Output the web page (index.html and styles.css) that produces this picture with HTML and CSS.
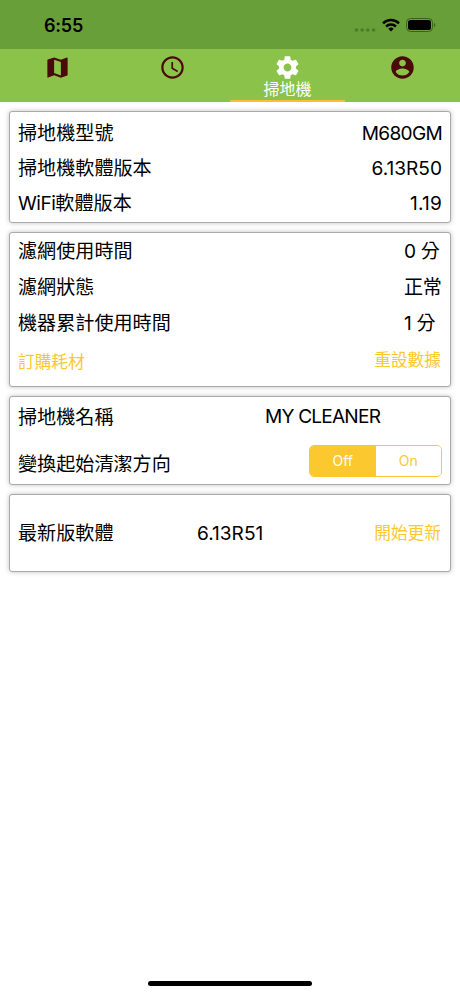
FILE: index.html
```html
<!DOCTYPE html>
<html lang="zh-Hant">
<head>
    <meta charset="UTF-8">
    <meta name="viewport" content="width=device-width, initial-scale=1.0">
    <title>掃地機</title>
    <link rel="stylesheet" href="styles.css">
</head>
<body>
    <header class="status-bar">
        <span class="clock">6:55</span>
        <div class="status-icons">
            <svg class="signal" width="22" height="4" viewBox="0 0 22 4">
                <circle cx="2.5" cy="2" r="1.8"/>
                <circle cx="8.2" cy="2" r="1.8"/>
                <circle cx="13.8" cy="2" r="1.8"/>
                <circle cx="19.6" cy="2" r="1.8"/>
            </svg>
            <svg class="wifi" width="18" height="14" viewBox="0 0 18 14" fill="none" stroke="#000" stroke-width="2.5">
                <path d="M1 5.3a11.4 11.4 0 0 1 16 0"/>
                <path d="M4.1 8.5a7 7 0 0 1 9.8 0"/>
                <path d="M6.3 10.7a3.9 3.9 0 0 1 5.4 0L9 13.5z" fill="#000" stroke="none"/>
            </svg>
            <svg class="battery" width="30" height="14" viewBox="0 0 30 14">
                <rect x="0.5" y="0.5" width="26" height="13" rx="4" fill="none" stroke="#3b611d"/>
                <rect x="2" y="2" width="23" height="10" rx="2.5"/>
                <path d="M28 4.7c1.7.8 1.7 3.8 0 4.6z" fill="#3b611d"/>
            </svg>
        </div>
    </header>

    <nav class="tabs">
        <a class="tab">
            <svg width="27" height="27" viewBox="0 0 24 24"><path d="M20.5 3l-.16.03L15 5.1 9 3 3.36 4.9c-.21.07-.36.25-.36.48V20.5c0 .28.22.5.5.5l.16-.03L9 18.9l6 2.1 5.64-1.9c.21-.07.36-.25.36-.48V3.5c0-.28-.22-.5-.5-.5zM15 19l-6-2.11V5l6 2.11V19z"/></svg>
        </a>
        <a class="tab">
            <svg width="27" height="27" viewBox="0 0 24 24"><path d="M11.99 2C6.47 2 2 6.48 2 12s4.47 10 9.99 10C17.52 22 22 17.52 22 12S17.52 2 11.99 2zM12 20c-4.42 0-8-3.58-8-8s3.58-8 8-8 8 3.58 8 8-3.58 8-8 8zm.5-13H11v6l5.25 3.15.75-1.23-4.5-2.67z"/></svg>
        </a>
        <a class="tab active">
            <svg width="27" height="27" viewBox="0 0 24 24"><path d="M19.43 12.98c.04-.32.07-.64.07-.98s-.03-.66-.07-.98l2.11-1.65c.19-.15.24-.42.12-.64l-2-3.46c-.12-.22-.39-.3-.61-.22l-2.49 1c-.52-.4-1.08-.73-1.69-.98l-.38-2.65C14.46 2.18 14.25 2 14 2h-4c-.25 0-.46.18-.49.42l-.38 2.65c-.61.25-1.17.59-1.69.98l-2.49-1c-.23-.09-.49 0-.61.22l-2 3.46c-.13.22-.07.49.12.64l2.11 1.65c-.04.32-.07.65-.07.98s.03.66.07.98l-2.11 1.65c-.19.15-.24.42-.12.64l2 3.46c.12.22.39.3.61.22l2.49-1c.52.4 1.08.73 1.69.98l.38 2.65c.03.24.24.42.49.42h4c.25 0 .46-.18.49-.42l.38-2.65c.61-.25 1.17-.59 1.69-.98l2.49 1c.23.09.49 0 .61-.22l2-3.46c.12-.22.07-.49-.12-.64l-2.11-1.65zM12 15.5c-1.93 0-3.5-1.57-3.5-3.5s1.57-3.5 3.5-3.5 3.5 1.57 3.5 3.5-1.57 3.5-3.5 3.5z"/></svg>
            <span class="tab-label">掃地機</span>
        </a>
        <a class="tab">
            <svg width="27" height="27" viewBox="0 0 24 24"><path d="M12 2C6.48 2 2 6.48 2 12s4.48 10 10 10 10-4.48 10-10S17.52 2 12 2zm0 3c1.66 0 3 1.34 3 3s-1.34 3-3 3-3-1.34-3-3 1.34-3 3-3zm0 14.2c-2.5 0-4.71-1.28-6-3.22.03-1.99 4-3.08 6-3.08 1.99 0 5.97 1.09 6 3.08-1.29 1.94-3.5 3.22-6 3.22z"/></svg>
        </a>
    </nav>

    <main class="cards">
        <section class="card versions">
            <div class="row"><span>掃地機型號</span><span class="value model">M680GM</span></div>
            <div class="row"><span>掃地機軟體版本</span><span class="value">6.13R50</span></div>
            <div class="row"><span><span class="wifi-text">WiFi</span>軟體版本</span><span class="value wifi-version">1.19</span></div>
        </section>

        <section class="card usage">
            <div class="row"><span>濾網使用時間</span><span class="time">0 分</span></div>
            <div class="row"><span>濾網狀態</span><span class="time">正常</span></div>
            <div class="row"><span>機器累計使用時間</span><span class="time">1 分</span></div>
            <div class="row actions"><a class="link order">訂購耗材</a><a class="link">重設數據</a></div>
        </section>

        <section class="card settings">
            <div class="row name-row"><span>掃地機名稱</span><span class="name">MY CLEANER</span></div>
            <div class="row">
                <span>變換起始清潔方向</span>
                <div class="switch">
                    <button type="button" class="selected">Off</button>
                    <button type="button">On</button>
                </div>
            </div>
        </section>

        <section class="card update">
            <span>最新版軟體</span>
            <span class="value">6.13R51</span>
            <a class="link">開始更新</a>
        </section>
    </main>

    <div class="home-bar"></div>
</body>
</html>
```

FILE: styles.css
```css
* {
    box-sizing: border-box;
}

body {
    margin: 0;
    height: 996px;
    display: flex;
    flex-direction: column;
    background-color: #fff;
    color: #000;
    font-family: Inter, "Noto Sans CJK TC", sans-serif;
    font-size: 19.1px;
    overflow: hidden;
}

.status-bar {
    height: 49px;
    display: flex;
    justify-content: space-between;
    padding: 0 24px 0 44px;
    background-color: #689f38;
}

.clock {
    margin-top: 15px;
    font-size: 18px;
    font-weight: 600;
    line-height: 22px;
    letter-spacing: -0.2px;
}

.status-icons {
    display: flex;
    align-items: flex-start;
    padding-top: 18px;
}

.signal {
    margin: 10px 6px 0 0;
    fill: #4c7c28;
}

.wifi {
    margin-right: 6px;
}

.tabs {
    height: 53px;
    display: grid;
    grid-template-columns: repeat(4, 1fr);
    background-color: #8bc34a;
}

.tab {
    display: flex;
    flex-direction: column;
    align-items: center;
    padding-top: 4.5px;
    fill: #4a0a08;
}

.tab.active {
    fill: #fff;
    color: #fff;
    border-bottom: 2px solid #fbc02d;
}

.tab-label {
    font-size: 16px;
    line-height: 17px;
}

.cards {
    display: flex;
    flex-direction: column;
    gap: 9px;
    padding: 9px 9px 0;
}

.card {
    padding: 0 8px;
    border: 1px solid #aaa;
    border-radius: 3px;
    background-color: #fff;
    box-shadow: 0 0 5px rgba(0, 0, 0, 0.25);
}

.row {
    display: flex;
    justify-content: space-between;
    align-items: center;
}

.value {
    padding-top: 2px;
}

.versions {
    height: 112px;
    padding-top: 2px;
}

.versions .row {
    height: 35px;
}

.model {
    letter-spacing: -0.7px;
}

.wifi-text {
    letter-spacing: -0.5px;
}

.wifi-version {
    letter-spacing: 0.2px;
}

.usage {
    height: 155px;
}

.usage .row {
    height: 36px;
    margin-top: -1px;
    margin-bottom: 1px;
}

.usage .actions {
    padding-top: 2px;
}

.time {
    width: 38px;
    white-space: nowrap;
    letter-spacing: -0.3px;
}

.link {
    color: #fbc830;
    font-size: 16.7px;
    padding-right: 1px;
}

.order {
    padding-top: 3px;
}

.settings {
    height: 89px;
}

.settings .row {
    height: 56px;
}

.settings .name-row {
    height: 38px;
}

.name {
    width: 177px;
    letter-spacing: -0.8px;
}

.switch {
    width: 133px;
    height: 32px;
    display: flex;
    border: 1px solid #fbc830;
    border-radius: 5px;
    overflow: hidden;
    margin-bottom: 5px;
}

.switch button {
    flex: 1;
    padding: 0;
    border: none;
    background-color: #fff;
    color: #fbc830;
    font-family: inherit;
    font-size: 14px;
}

.switch .selected {
    background-color: #fbc830;
    color: #fff;
}

.update {
    height: 78px;
    padding-bottom: 2px;
    display: grid;
    grid-template-columns: 179px 1fr auto;
    align-items: center;
}

.home-bar {
    width: 164px;
    height: 5px;
    margin: auto auto 10px;
    border-radius: 3px;
    background-color: #000;
}
```
